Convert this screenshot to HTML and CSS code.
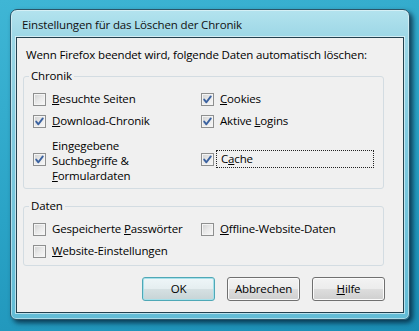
FILE: index.html
```html
<!DOCTYPE html>
<html lang="de">
<head>
<meta charset="utf-8">
<title>Einstellungen für das Löschen der Chronik</title>
<link rel="stylesheet" href="styles.css">
</head>
<body>
<div class="window">
  <div class="titlebar">Einstellungen für das Löschen der Chronik</div>
  <div class="client">
    <p class="intro">Wenn Firefox beendet wird, folgende Daten automatisch löschen:</p>
    <fieldset class="group">
      <legend>Chronik</legend>
      <div class="grid">
        <div class="item"><span class="cb"></span><span class="lbl"><u>B</u>esuchte Seiten</span></div>
        <div class="item"><span class="cb on"><svg viewBox="0 0 13 13" width="13" height="13"><path d="M3.2 6.6 L5.4 9.3 L9.8 3.4" /></svg></span><span class="lbl"><u>C</u>ookies</span></div>
        <div class="item"><span class="cb on"><svg viewBox="0 0 13 13" width="13" height="13"><path d="M3.2 6.6 L5.4 9.3 L9.8 3.4" /></svg></span><span class="lbl"><u>D</u>ownload-Chronik</span></div>
        <div class="item"><span class="cb on"><svg viewBox="0 0 13 13" width="13" height="13"><path d="M3.2 6.6 L5.4 9.3 L9.8 3.4" /></svg></span><span class="lbl">Aktive <u>L</u>ogins</span></div>
        <div class="item"><span class="cb on"><svg viewBox="0 0 13 13" width="13" height="13"><path d="M3.2 6.6 L5.4 9.3 L9.8 3.4" /></svg></span><span class="lbl multi">Eingegebene<br>Suchbegriffe &amp;<br><u>F</u>ormulardaten</span></div>
        <div class="item"><span class="cb on"><svg viewBox="0 0 13 13" width="13" height="13"><path d="M3.2 6.6 L5.4 9.3 L9.8 3.4" /></svg></span><span class="lbl focus">C<u>a</u>che</span></div>
      </div>
    </fieldset>
    <fieldset class="group second">
      <legend>Daten</legend>
      <div class="grid">
        <div class="item"><span class="cb"></span><span class="lbl">Gespeicherte <u>P</u>asswörter</span></div>
        <div class="item"><span class="cb"></span><span class="lbl"><u>O</u>ffline-Website-Daten</span></div>
        <div class="item"><span class="cb"></span><span class="lbl"><u>W</u>ebsite-Einstellungen</span></div>
      </div>
    </fieldset>
    <div class="buttons">
      <button class="btn default">OK</button>
      <button class="btn">Abbrechen</button>
      <button class="btn"><u>H</u>ilfe</button>
    </div>
  </div>
</div>
</body>
</html>
```

FILE: styles.css
```css
html, body {
  margin: 0;
  padding: 0;
}
body {
  width: 419px;
  height: 331px;
  overflow: hidden;
  background: linear-gradient(165deg, #3fb6d5 0%, #2aa3c6 50%, #1a8db4 100%);
  font-family: "Segoe UI", "Open Sans", "Noto Sans", sans-serif;
  font-size: 11.5px;
  letter-spacing: -0.15px;
  color: #000;
  padding-top: 9px;
  box-sizing: border-box;
}
.window {
  margin-left: 10px;
  width: 400px;
  box-sizing: border-box;
  border: 1px solid #2c5568;
  border-radius: 7px 7px 6px 6px;
  background: linear-gradient(to bottom, #b3e3ee 0px, #9dd7e6 27px, #82cbe0 120px, #62bcd6 100%);
  box-shadow: 3px 3px 5px rgba(0, 20, 40, 0.7), inset 0 0 0 1px rgba(255, 255, 255, 0.45);
  padding: 0 5px 6px 5px;
}
.titlebar {
  height: 27px;
  box-sizing: border-box;
  padding: 7px 0 0 6px;
  line-height: 16px;
  color: #111;
  white-space: nowrap;
}
.client {
  border: 1px solid #22404e;
  background: #f0f0f0;
  box-shadow: 0 0 0 1px rgba(255, 255, 255, 0.55);
  padding: 9px 0 11px 0;
}
.intro {
  margin: 0;
  padding-left: 9px;
  line-height: 16px;
  white-space: nowrap;
}
.group {
  margin: 5px 19px 0 6px;
  padding: 0 0 5px 0;
  border: 1px solid #d3dce2;
  border-radius: 3px;
  min-width: 0;
}
.group.second {
  margin-top: 9px;
  padding-bottom: 6px;
}
.group legend {
  margin-left: 5px;
  padding: 0 2px;
  line-height: 16px;
}
.grid {
  display: grid;
  grid-template-columns: 168px 1fr;
  row-gap: 6px;
  padding: 7px 0 0 9px;
}
.item {
  display: flex;
  align-items: center;
  gap: 6px;
  min-height: 16px;
}
.lbl {
  line-height: 16px;
  white-space: nowrap;
}
.lbl.multi {
  line-height: 15px;
  padding-top: 3px;
}
.lbl.focus {
  flex: 1;
  margin-left: -4px;
  margin-right: 9px;
  padding: 0 4px;
  border: 1px dotted #222;
}
.cb {
  flex: none;
  width: 13px;
  height: 13px;
  box-sizing: border-box;
  border: 1px solid #8e8f8f;
  background: linear-gradient(135deg, #cfd0d0 0%, #e9e9e9 50%, #f8f8f8 100%);
  box-shadow: inset 0 0 0 1px #f4f4f4;
  position: relative;
}
.cb svg {
  position: absolute;
  left: -1px;
  top: -1px;
}
.cb svg path {
  fill: none;
  stroke: #3b62a0;
  stroke-width: 1.9;
  stroke-linecap: round;
  stroke-linejoin: round;
}
u {
  text-decoration: underline;
  text-underline-offset: 1px;
}
.buttons {
  display: flex;
  justify-content: flex-end;
  gap: 12px;
  margin-top: 11px;
  padding-right: 18px;
}
.btn {
  width: 73px;
  height: 24px;
  box-sizing: border-box;
  margin: 0;
  padding: 0;
  font: inherit;
  letter-spacing: inherit;
  color: #000;
  border: 1px solid #707070;
  border-radius: 3px;
  background: linear-gradient(to bottom, #f3f3f3 0%, #ececec 48%, #dddddd 52%, #cfcfcf 100%);
  box-shadow: inset 0 0 0 1px #fbfbfb;
  line-height: 20px;
}
.btn.default {
  border-color: #4fa8b6;
  background: linear-gradient(to bottom, #eef6f8 0%, #e5eef0 48%, #d5e0e2 52%, #c7d4d6 100%);
  box-shadow: inset 0 0 0 1px #a6e0ea;
}
```
